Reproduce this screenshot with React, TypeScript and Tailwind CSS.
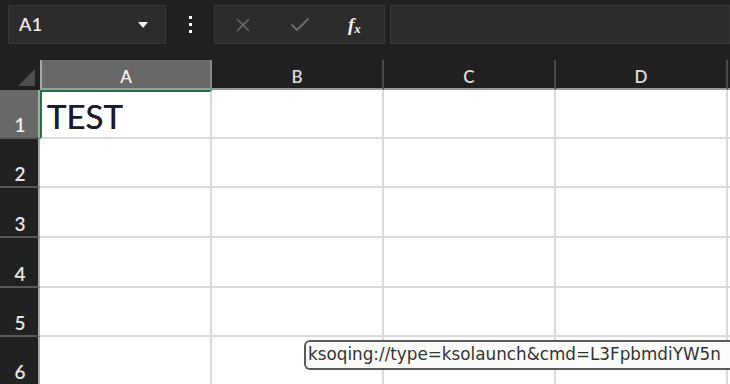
import { X, Check } from "lucide-react";

const cols = ["A", "B", "C", "D", ""];
const colWidths = ["w-[172px]", "w-[172px]", "w-[172px]", "w-[172px]", "w-[43px]"];
const rows = [
  { n: 1, h: "h-[49px]" },
  { n: 2, h: "h-[49px]" },
  { n: 3, h: "h-[50px]" },
  { n: 4, h: "h-[50px]" },
  { n: 5, h: "h-[49px]" },
  { n: 6, h: "h-[49px]" },
];

const App = () => {
  return (
    <div className="relative w-[730px] h-[384px] overflow-hidden bg-[#202020] font-['Lato',sans-serif]">
      {/* formula bar */}
      <div className="flex items-center h-[60px] pl-2 pb-[16px] pt-[5px]">
        <div className="shrink-0 flex items-center justify-between w-[158px] h-[39px] bg-[#2c2c2c] border border-[#383838] pl-[10px] pr-[17px]">
          <span className="text-[18px] text-[#ececec] font-semibold tracking-wide">A1</span>
          <div className="w-0 h-0 border-l-[5px] border-r-[5px] border-t-[6px] border-l-transparent border-r-transparent border-t-[#f0f0f0]" />
        </div>
        <div className="shrink-0 flex flex-col items-center justify-center gap-[4px] w-[48px]">
          <div className="w-[3px] h-[3px] bg-white" />
          <div className="w-[3px] h-[3px] bg-white" />
          <div className="w-[3px] h-[3px] bg-white" />
        </div>
        <div className="shrink-0 flex items-center w-[171px] h-[39px] bg-[#2c2c2c] border border-[#383838] pl-[17px]">
          <X size={22} strokeWidth={1.6} className="text-[#6c6c6c]" />
          <Check size={24} strokeWidth={1.8} className="text-[#6c6c6c] ml-[34px]" />
          <span className="ml-[36px] font-['Liberation_Serif',serif] italic font-bold text-[19px] text-[#f2f2f2] leading-none">
            f<span className="text-[13px] relative top-[2px]">x</span>
          </span>
        </div>
        <div className="flex-1 h-[39px] ml-[5px] bg-[#2c2c2c] border border-[#383838]" />
      </div>

      {/* column headers */}
      <div className="flex h-[30px]">
        <div className="shrink-0 w-[40px] flex items-end justify-end pr-[5px] pb-[4px]">
          <div className="w-0 h-0 border-b-[17px] border-l-[17px] border-b-[#4e4e4e] border-l-transparent" />
        </div>
        {cols.map((c, i) => (
          <div
            key={i}
            className={`shrink-0 ${colWidths[i]} flex items-center justify-center text-[17px] font-semibold ${
              i === 0
                ? "bg-[#686868] text-[#f4f4f4] border-l-[2px] border-l-[#a6a6a6] border-r-[2px] border-r-[#8a8a8a]"
                : "text-[#dcdcdc] border-r-[2px] border-r-[#4a4a4a]"
            } border-b-[2px] border-b-[#9a9a9a] pt-[5px]`}
          >
            {c}
          </div>
        ))}
      </div>

      {/* rows */}
      {rows.map((r) => (
        <div key={r.n} className={`flex ${r.h}`}>
          <div
            className={`shrink-0 w-[40px] flex items-end justify-center pl-[2px] pb-[3px] text-[19px] leading-none font-semibold border-r-[2px] border-r-[#a8a8a8] border-b-[2px] border-b-[#595959] ${
              r.n === 1 ? "bg-[#686868] text-[#f0f0f0]" : "bg-[#212121] text-[#e6e6e6]"
            }`}
          >
            {r.n}
          </div>
          {cols.map((c, i) => (
            <div
              key={i}
              className={`shrink-0 ${colWidths[i]} bg-white border-r-[2px] border-b-[2px] border-[#dadada] ${
                r.n === 1 && i === 0 ? "border-l-[2px] border-l-[#217346] border-t-[2px] border-t-[#217346]" : ""
              } flex items-center`}
            >
              {r.n === 1 && i === 0 && (
                <span className="pl-[5px] text-[33px] text-[#1c1c2c] leading-none pt-[4px] [text-shadow:0_0_0.6px_#1c1c2c]">TEST</span>
              )}
            </div>
          ))}
        </div>
      ))}

      {/* link tooltip */}
      <div className="absolute left-[304px] top-[340px] w-[426px] h-[30px] bg-[#fbfbfb] border-[2px] border-r-0 border-[#5a5a5a] rounded-l-[6px] flex items-center pl-[2px] overflow-hidden">
        <span className="font-['DejaVu_Sans',sans-serif] text-[16.8px] text-[#333] whitespace-nowrap">
          ksoqing://type=ksolaunch&amp;cmd=L3FpbmdiYW5n
        </span>
      </div>
    </div>
  );
};

export default App;
